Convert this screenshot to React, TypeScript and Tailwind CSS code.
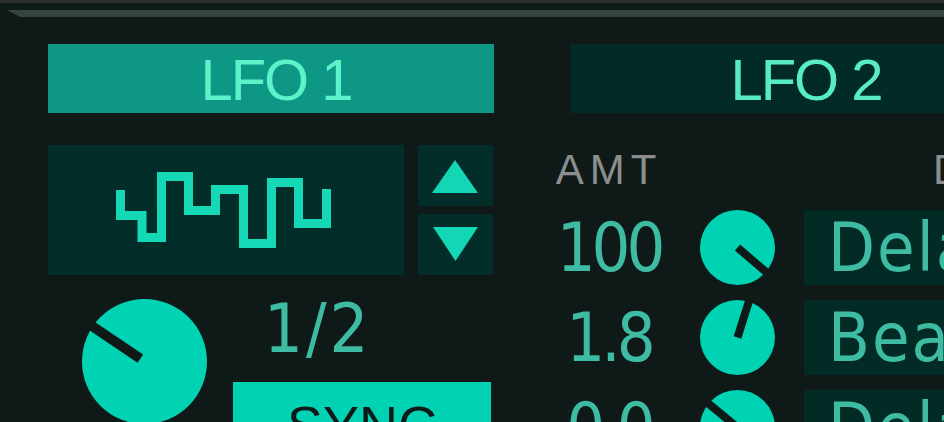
import React from 'react';

// knob: filled disc with a dark pointer bar
function Knob({ size, angle, bar, start = 0 }: { size: number; angle: number; bar: number; start?: number }) {
  const r = size / 2;
  const rad = (angle * Math.PI) / 180;
  const x1 = r + start * Math.cos(rad);
  const y1 = r + start * Math.sin(rad);
  const x2 = r + (r + 6) * Math.cos(rad);
  const y2 = r + (r + 6) * Math.sin(rad);
  return (
    <svg width={size} height={size} viewBox={`0 0 ${size} ${size}`} className="block shrink-0">
      <circle cx={r} cy={r} r={r} fill="#00d3b3" />
      <line x1={x1} y1={y1} x2={x2} y2={y2} stroke="#0f1a18" strokeWidth={bar} />
    </svg>
  );
}

const rows = [
  { value: '100', angle: 40.7, dest: 'Delay Time' },
  { value: '1.8', angle: -72.5, dest: 'Beat Repeat' },
  { value: '0.0', angle: -140.5, dest: 'Delay Mix' },
];

export default function App() {
  return (
    <div className="w-[944px] h-[422px] overflow-hidden bg-[#0f1a18] font-['Liberation_Sans',sans-serif]">
      {/* top frame */}
      <div className="h-[3px] bg-[#2b2f2e]" />
      <div className="h-[7px] bg-[#111b19]" />
      <div className="h-[7px] bg-[#34443f] [clip-path:polygon(7px_0,100%_0,100%_100%,20px_100%)]" />

      <div className="flex pt-[27px]">
        {/* LFO 1 */}
        <div className="ml-[48px] w-[446px] shrink-0 flex flex-col">
          <div className="h-[69px] bg-[#0e9784] flex items-center justify-center pl-[10px] pt-[2px]">
            <span className="text-[58px] leading-none tracking-[-2px] text-[#5cf2ca]">LFO 1</span>
          </div>

          <div className="mt-[32px] flex h-[130px]">
            <div className="w-[356px] bg-[#022d28]">
              <svg width="356" height="130" viewBox="48 145 356 130" className="block">
                <path
                  d="M120.5 190 V215.5 H142 V237.5 H161.5 V176.5 H188.5 V210.5 H215.5 V189.5 H243.5 V243.5 H271.5 V182.5 H298.5 V223.5 H326.5 V189"
                  fill="none"
                  stroke="#15d8b6"
                  strokeWidth="9"
                  strokeLinejoin="miter"
                />
              </svg>
            </div>
            <div className="ml-[14px] w-[75px] flex flex-col gap-[8px]">
              <div className="h-[61px] bg-[#022d28]">
                <svg width="75" height="61" viewBox="0 0 75 61" className="block">
                  <polygon points="37,15 60,48 14,48" fill="#13d6b4" />
                </svg>
              </div>
              <div className="h-[61px] bg-[#022d28]">
                <svg width="75" height="61" viewBox="0 0 75 61" className="block">
                  <polygon points="15,13 60,13 37.5,47" fill="#13d6b4" />
                </svg>
              </div>
            </div>
          </div>

          <div className="flex">
            <div className="ml-[34px] mt-[24px]">
              <Knob size={125} angle={-146} bar={10} start={5} />
            </div>
            <div className="ml-[26px] w-[258px] flex flex-col">
              <div className="mt-[20px] pl-[31px] h-[68px] text-[68px] leading-none tracking-[3px] [font-stretch:condensed] text-[#3dbba3] font-['DejaVu_Sans',sans-serif]">
                1/2
              </div>
              <div className="mt-[19px] h-[60px] bg-[#00d2b3] flex justify-center pt-[16px]">
                <span className="text-[54px] leading-none text-[#0f1a18]">SYNC</span>
              </div>
            </div>
          </div>
        </div>

        {/* LFO 2 */}
        <div className="ml-[46px] w-[600px] shrink-0 flex flex-col">
          <div className="ml-[30px] w-[446px] h-[69px] bg-[#022b26] flex items-center justify-center pl-[26px] pt-[2px]">
            <span className="text-[58px] leading-none tracking-[-2px] text-[#58ecc6]">LFO 2</span>
          </div>

          <div className="mt-[36px] h-[42px] flex text-[42px] leading-none tracking-[6px] text-[#8b8e8d]">
            <div className="w-[138px] text-center">AMT</div>
            <div className="ml-[255px]">DEST</div>
          </div>

          <div className="mt-[19px] flex flex-col gap-[15px]">
            {rows.map((row) => (
              <div key={row.value} className="h-[75px] flex items-center">
                <div className="w-[138px] flex justify-center text-[68px] leading-none tracking-[-4px] [font-stretch:condensed] text-[#3dbba3] font-['DejaVu_Sans',sans-serif]">
                  {row.value}
                </div>
                <div className="ml-[22px] w-[75px]">
                  <Knob size={75} angle={row.angle} bar={8} />
                </div>
                <div className="ml-[29px] w-[330px] h-[75px] bg-[#022b26] flex items-center pl-[24px] whitespace-nowrap text-[68px] leading-none tracking-[2px] [font-stretch:condensed] text-[#3dbba3] font-['DejaVu_Sans',sans-serif]">
                  {row.dest}
                </div>
              </div>
            ))}
          </div>
        </div>
      </div>
    </div>
  );
}
